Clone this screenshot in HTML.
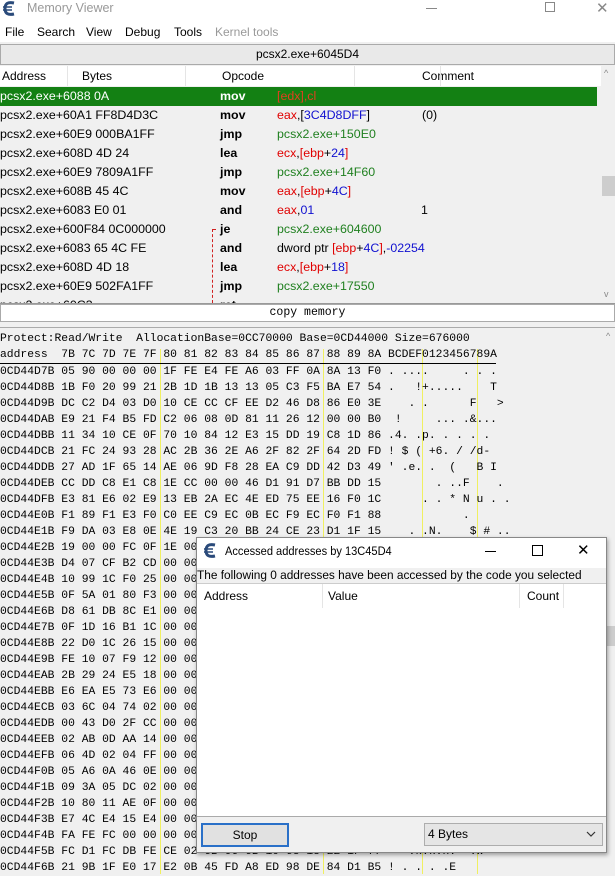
<!DOCTYPE html>
<html><head><meta charset="utf-8"><style>
*{margin:0;padding:0;box-sizing:border-box}
body{width:615px;height:874px;overflow:hidden;background:#f0f0f0;font-family:"Liberation Sans",sans-serif;font-size:12px;color:#000;position:relative}
.a{position:absolute;white-space:nowrap}
.mono{font-family:"Liberation Mono",monospace;font-size:11.35px;line-height:16px;white-space:pre}
.r{color:#e00000}.b{color:#1010d0}.g{color:#208020}
i{font-style:normal}
.row{position:absolute;left:0;width:601px;height:19px;line-height:19px;font-size:12.4px}
.row span{position:absolute}
.op{left:220px;font-weight:bold}
.arg{left:277px}
.yl{position:absolute;width:1px;background:#f0f060;top:349px;height:525px}
</style></head><body>
<div class="a" style="left:0;top:0;width:615px;height:18px;background:#fff"></div>
<svg class="a" style="left:3px;top:1px" width="13" height="15" viewBox="0 0 13 15"><path d="M11 2 Q2 0 2 7.5 Q2 15 11 13" fill="none" stroke="#2a4a7a" stroke-width="3"/><path d="M0 6h9M0 9h9" stroke="#2a4a7a" stroke-width="1.5"/></svg>
<div class="a" style="left:27px;top:1px;color:#999;font-size:12.5px">Memory Viewer</div>
<div class="a" style="left:426px;top:8px;width:11px;height:1px;background:#888"></div>
<div class="a" style="left:545px;top:2px;width:10px;height:10px;border:1px solid #888"></div>
<div class="a" style="left:596px;top:-1px;color:#888;font-size:15px">✕</div>
<div class="a" style="left:0;top:18px;width:615px;height:24px;background:#fff"></div>
<div class="a" style="left:5px;top:25px">File</div>
<div class="a" style="left:37px;top:25px">Search</div>
<div class="a" style="left:86px;top:25px">View</div>
<div class="a" style="left:125px;top:25px">Debug</div>
<div class="a" style="left:174px;top:25px">Tools</div>
<div class="a" style="left:215px;top:25px;color:#999">Kernel tools</div>
<div class="a" style="left:0;top:44px;width:615px;height:21px;border:1px solid #aaa;background:#e9e9e9;text-align:center;line-height:19px">pcsx2.exe+6045D4</div>
<div class="a" style="left:0;top:66px;width:601px;height:237px;background:#f0f0f0"></div>
<div class="a" style="left:0;top:66px;width:601px;height:20px;background:#fff"></div>
<div class="a" style="left:2px;top:69px">Address</div>
<div class="a" style="left:67px;top:66px;width:1px;height:20px;background:#e5e5e5"></div>
<div class="a" style="left:82px;top:69px">Bytes</div>
<div class="a" style="left:185px;top:66px;width:1px;height:20px;background:#e5e5e5"></div>
<div class="a" style="left:222px;top:69px">Opcode</div>
<div class="a" style="left:354px;top:66px;width:1px;height:20px;background:#e5e5e5"></div>
<div class="a" style="left:422px;top:69px">Comment</div>
<div class="a" style="left:440px;top:66px;width:1px;height:20px;background:#e5e5e5"></div>
<div class="row" style="top:87px;background:#138013;width:597px;color:#fff"><span style="left:0">pcsx2.exe+6088 0A</span><span class="op">mov</span><span class="arg" style="color:#e04020">[edx],cl</span></div>
<div class="row" style="top:106px"><span style="left:0">pcsx2.exe+60A1 FF8D4D3C</span><span class="op">mov</span><span class="arg"><i class="r">eax</i>,[<i class="b">3C4D8DFF</i>]</span><span style="left:422px">(0)</span></div>
<div class="row" style="top:125px"><span style="left:0">pcsx2.exe+60E9 000BA1FF</span><span class="op">jmp</span><span class="arg g">pcsx2.exe+150E0</span></div>
<div class="row" style="top:144px"><span style="left:0">pcsx2.exe+608D 4D 24</span><span class="op">lea</span><span class="arg"><i class="r">ecx</i>,<i class="r">[ebp</i>+<i class="b">24</i><i class="r">]</i></span></div>
<div class="row" style="top:163px"><span style="left:0">pcsx2.exe+60E9 7809A1FF</span><span class="op">jmp</span><span class="arg g">pcsx2.exe+14F60</span></div>
<div class="row" style="top:182px"><span style="left:0">pcsx2.exe+608B 45 4C</span><span class="op">mov</span><span class="arg"><i class="r">eax</i>,<i class="r">[ebp</i>+<i class="b">4C</i><i class="r">]</i></span></div>
<div class="row" style="top:201px"><span style="left:0">pcsx2.exe+6083 E0 01</span><span class="op">and</span><span class="arg"><i class="r">eax</i>,<i class="b">01</i></span><span style="left:421px">1</span></div>
<div class="row" style="top:220px"><span style="left:0">pcsx2.exe+600F84 0C000000</span><span class="op">je</span><span class="arg g">pcsx2.exe+604600</span></div>
<div class="row" style="top:239px"><span style="left:0">pcsx2.exe+6083 65 4C FE</span><span class="op">and</span><span class="arg">dword ptr <i class="r">[ebp</i>+<i class="b">4C</i><i class="r">]</i>,<i class="b">-02254</i></span></div>
<div class="row" style="top:258px"><span style="left:0">pcsx2.exe+608D 4D 18</span><span class="op">lea</span><span class="arg"><i class="r">ecx</i>,<i class="r">[ebp</i>+<i class="b">18</i><i class="r">]</i></span></div>
<div class="row" style="top:277px"><span style="left:0">pcsx2.exe+60E9 502FA1FF</span><span class="op">jmp</span><span class="arg g">pcsx2.exe+17550</span></div>
<div class="row" style="top:296px;height:7px;overflow:hidden"><span style="left:0">pcsx2.exe+60C3</span><span class="op">ret</span></div>
<div class="a" style="left:212px;top:229px;width:0;height:74px;border-left:1px dashed #d02020"></div>
<div class="a" style="left:212px;top:229px;width:4px;height:0;border-top:1px dashed #d02020"></div>
<div class="a" style="left:601px;top:66px;width:14px;height:237px;background:#f0f0f0"></div>
<div class="a" style="left:604px;top:68px;color:#888;font-size:9px">^</div>
<div class="a" style="left:602px;top:176px;width:13px;height:20px;background:#cdcdcd"></div>
<div class="a" style="left:604px;top:289px;color:#888;font-size:9px">v</div>
<div class="a" style="left:0;top:303px;width:615px;height:1px;background:#999"></div>
<div class="a" style="left:0;top:304px;width:615px;height:18px;background:#fff;border:1px solid #aaa;text-align:center;font-family:'Liberation Mono',monospace;font-size:11.5px;line-height:16px">copy memory</div>
<div class="a" style="left:0;top:327px;width:615px;height:1px;background:#aaa"></div>
<div class="a" style="left:0;top:328px;width:601px;height:546px;background:#f0f0f0"></div>
<div class="a" style="left:606px;top:331px;color:#888;font-size:9px">^</div>
<div class="a" style="left:602px;top:626px;width:13px;height:20px;background:#cdcdcd"></div>
<div class="yl" style="left:160px"></div>
<div class="yl" style="left:323px"></div>
<div class="yl" style="left:422px"></div>
<div class="yl" style="left:477px"></div>
<div class="a" style="left:0;top:363px;width:496px;height:1px;background:#000"></div>
<div class="a mono" style="left:0;top:331px">Protect:Read/Write  AllocationBase=0CC70000 Base=0CD44000 Size=676000
address  7B 7C 7D 7E 7F 80 81 82 83 84 85 86 87 88 89 8A BCDEF0123456789A</div>
<div class="a mono" style="left:0;top:364px">0CD44D7B 05 90 00 00 00 1F FE E4 FE A6 03 FF 0A 8A 13 F0 . ....     . . .
0CD44D8B 1B F0 20 99 21 2B 1D 1B 13 13 05 C3 F5 BA E7 54 .   !+.....    T
0CD44D9B DC C2 D4 03 D0 10 CE CC CF EE D2 46 D8 86 E0 3E    . .      F   >
0CD44DAB E9 21 F4 B5 FD C2 06 08 0D 81 11 26 12 00 00 B0  !     ... .&...
0CD44DBB 11 34 10 CE 0F 70 10 84 12 E3 15 DD 19 C8 1D 86 .4. .p. . . . .
0CD44DCB 21 FC 24 93 28 AC 2B 36 2E A6 2F 82 2F 64 2D FD ! $ ( +6. / /d-
0CD44DDB 27 AD 1F 65 14 AE 06 9D F8 28 EA C9 DD 42 D3 49 ' .e. .  (   B I
0CD44DEB CC DD C8 E1 C8 1E CC 00 00 46 D1 91 D7 BB DD 15        . ..F    .
0CD44DFB E3 81 E6 02 E9 13 EB 2A EC 4E ED 75 EE 16 F0 1C      . . * N u . .
0CD44E0B F1 89 F1 E3 F0 C0 EE C9 EC 0B EC F9 EC F0 F1 88            .
0CD44E1B F9 DA 03 E8 0E 4E 19 C3 20 BB 24 CE 23 D1 1F 15    . .N.    $ # ..
0CD44E2B 19 00 00 FC 0F 1E 00 00 00 00 00 00 00 00 00 00
0CD44E3B D4 07 CF B2 CD 00 00 00 00 00 00 00 00 00 00 00
0CD44E4B 10 99 1C F0 25 00 00 00 00 00 00 00 00 00 00 00
0CD44E5B 0F 5A 01 80 F3 00 00 00 00 00 00 00 00 00 00 00
0CD44E6B D8 61 DB 8C E1 00 00 00 00 00 00 00 00 00 00 00
0CD44E7B 0F 1D 16 B1 1C 00 00 00 00 00 00 00 00 00 00 00
0CD44E8B 22 D0 1C 26 15 00 00 00 00 00 00 00 00 00 00 00
0CD44E9B FE 10 07 F9 12 00 00 00 00 00 00 00 00 00 00 00
0CD44EAB 2B 29 24 E5 18 00 00 00 00 00 00 00 00 00 00 00
0CD44EBB E6 EA E5 73 E6 00 00 00 00 00 00 00 00 00 00 00
0CD44ECB 03 6C 04 74 02 00 00 00 00 00 00 00 00 00 00 00
0CD44EDB 00 43 D0 2F CC 00 00 00 00 00 00 00 00 00 00 00
0CD44EEB 02 AB 0D AA 14 00 00 00 00 00 00 00 00 00 00 00
0CD44EFB 06 4D 02 04 FF 00 00 00 00 00 00 00 00 00 00 00
0CD44F0B 05 A6 0A 46 0E 00 00 00 00 00 00 00 00 00 00 00
0CD44F1B 09 3A 05 DC 02 00 00 00 00 00 00 00 00 00 00 00
0CD44F2B 10 80 11 AE 0F 00 00 00 00 00 00 00 00 00 00 00
0CD44F3B E7 4C E4 15 E4 00 00 00 00 00 00 00 00 00 00 00
0CD44F4B FA FE FC 00 00 00 00 00 00 00 00 00 00 00 00 00
0CD44F5B FC D1 FC DB FE CE 02 6B 06 6B 10 68 18 22 1F 77    .k.k.h.  .w
0CD44F6B 21 9B 1F E0 17 E2 0B 45 FD A8 ED 98 DE 84 D1 B5 ! . . . .E</div>
<div class="a" style="left:196px;top:537px;width:411px;height:316px;background:#f0f0f0;border:1px solid #888;box-shadow:1px 2px 4px rgba(0,0,0,.35)"></div>
<div class="a" style="left:197px;top:538px;width:409px;height:30px;background:#fff"></div>
<svg class="a" style="left:204px;top:543px" width="13" height="15" viewBox="0 0 13 15"><path d="M11 2 Q2 0 2 7.5 Q2 15 11 13" fill="none" stroke="#2a4a7a" stroke-width="3"/><path d="M0 6h9M0 9h9" stroke="#2a4a7a" stroke-width="1.5"/></svg>
<div class="a" style="left:225px;top:544px;font-size:12.3px;transform:scaleX(0.9);transform-origin:0 0">Accessed addresses by 13C45D4</div>
<div class="a" style="left:485px;top:551px;width:11px;height:1px;background:#000"></div>
<div class="a" style="left:532px;top:545px;width:11px;height:11px;border:1px solid #000"></div>
<div class="a" style="left:577px;top:541px;font-size:15px">✕</div>
<div class="a" style="left:197px;top:568px;font-size:12.3px;transform:scaleX(0.965);transform-origin:0 0">The following 0 addresses have been accessed by the code you selected</div>
<div class="a" style="left:197px;top:583px;width:409px;height:234px;background:#fff;border-top:1px solid #ccc;border-bottom:1px solid #aaa"></div>
<div class="a" style="left:204px;top:589px">Address</div>
<div class="a" style="left:322px;top:584px;width:1px;height:24px;background:#e5e5e5"></div>
<div class="a" style="left:328px;top:589px">Value</div>
<div class="a" style="left:519px;top:584px;width:1px;height:24px;background:#e5e5e5"></div>
<div class="a" style="left:527px;top:589px">Count</div>
<div class="a" style="left:563px;top:584px;width:1px;height:24px;background:#e5e5e5"></div>
<div class="a" style="left:201px;top:823px;width:88px;height:24px;border:2px solid #2a70c8;background:#e1e1e1;text-align:center;line-height:20px">Stop</div>
<div class="a" style="left:424px;top:823px;width:179px;height:23px;border:1px solid #adadad;background:#e5e5e5;line-height:21px;padding-left:3px">4 Bytes</div>
<svg class="a" style="left:586px;top:830px" width="10" height="8"><path d="M1 2l4 4 4-4" fill="none" stroke="#333" stroke-width="1.2"/></svg>
</body></html>
